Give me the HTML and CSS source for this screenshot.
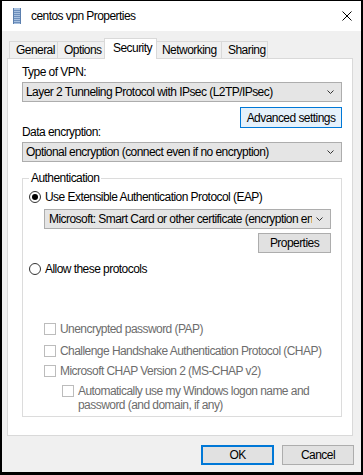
FILE: index.html
```html
<!doctype html>
<html lang="en">
<head>
<title>centos vpn Properties</title>
<meta name="viewport" content="width=device-width, initial-scale=1.0">
<link rel="stylesheet" href="styles.css">
</head>
<body>

<div class="window">
	<header class="titlebar">
		<svg class="app-icon" width="8" height="16" viewBox="0 0 8 16">
			<rect x="0" y="0" width="8" height="16" fill="#a9c1df"/>
			<rect x="0" y="0" width="1" height="16" fill="#5b7fae"/>
			<rect x="7" y="0" width="1" height="16" fill="#5b7fae"/>
			<rect x="1" y="2" width="6" height="1" fill="#6d8fbc"/>
			<rect x="1" y="4" width="6" height="1" fill="#6d8fbc"/>
			<rect x="1" y="6" width="6" height="1" fill="#6d8fbc"/>
			<rect x="1" y="8" width="6" height="1" fill="#6d8fbc"/>
			<rect x="1" y="10" width="6" height="1" fill="#6d8fbc"/>
			<rect x="1" y="12" width="6" height="1" fill="#6d8fbc"/>
			<rect x="1" y="14" width="6" height="1" fill="#6d8fbc"/>
		</svg>
		<span class="title">centos vpn Properties</span>
		<svg class="close" width="10" height="10" viewBox="0 0 10 10">
			<path d="M0.5 0.5 L9.5 9.5 M9.5 0.5 L0.5 9.5" stroke="#000" stroke-width="1" fill="none"/>
		</svg>
	</header>

	<div class="client">
		<nav class="tabs">
			<a class="tab tab-general">General</a>
			<a class="tab tab-options">Options</a>
			<a class="tab tab-security selected">Security</a>
			<a class="tab tab-networking">Networking</a>
			<a class="tab tab-sharing">Sharing</a>
		</nav>

		<section class="panel">
			<div class="label">Type of VPN:</div>
			<div class="combo">
				<span class="value">Layer 2 Tunneling Protocol with IPsec (L2TP/IPsec)</span>
				<svg class="chevron" width="7" height="4" viewBox="0 0 7 4"><path d="M0.5 0.5 L3.5 3.5 L6.5 0.5" stroke="#333" fill="none"/></svg>
			</div>
			<div class="button-row advanced-row">
				<button class="btn btn-advanced">Advanced settings</button>
			</div>
			<div class="label">Data encryption:</div>
			<div class="combo combo-encryption">
				<span class="value">Optional encryption (connect even if no encryption)</span>
				<svg class="chevron" width="7" height="4" viewBox="0 0 7 4"><path d="M0.5 0.5 L3.5 3.5 L6.5 0.5" stroke="#333" fill="none"/></svg>
			</div>

			<fieldset class="group">
				<legend>Authentication</legend>
				<div class="radio-row eap-row">
					<span class="radio checked"></span>
					<span>Use Extensible Authentication Protocol (EAP)</span>
				</div>
				<div class="combo combo-eap">
					<span class="value">Microsoft: Smart Card or other certificate (encryption enabled)</span>
					<svg class="chevron" width="7" height="4" viewBox="0 0 7 4"><path d="M0.5 0.5 L3.5 3.5 L6.5 0.5" stroke="#333" fill="none"/></svg>
				</div>
				<div class="button-row props-row">
					<button class="btn btn-props">Properties</button>
				</div>
				<div class="radio-row allow-row">
					<span class="radio"></span>
					<span>Allow these protocols</span>
				</div>

				<div class="check-row disabled pap-row">
					<span class="check"></span>
					<span>Unencrypted password (PAP)</span>
				</div>
				<div class="check-row disabled chap-row">
					<span class="check"></span>
					<span>Challenge Handshake Authentication Protocol (CHAP)</span>
				</div>
				<div class="check-row disabled mschap-row">
					<span class="check"></span>
					<span>Microsoft CHAP Version 2 (MS-CHAP v2)</span>
				</div>
				<div class="check-row disabled auto-row">
					<span class="check"></span>
					<span>Automatically use my Windows logon name and<br>password (and domain, if any)</span>
				</div>
			</fieldset>
		</section>

		<footer class="dialog-buttons">
			<button class="btn btn-ok">OK</button>
			<button class="btn btn-cancel">Cancel</button>
		</footer>
	</div>
</div>

</body>
</html>
```

FILE: styles.css
```css
html, body {
	margin: 0;
	padding: 0;
	background: #000;
}
body {
	font-family: "Liberation Sans", Arial, sans-serif;
	font-size: 12px;
	letter-spacing: -0.55px;
	color: #000;
}
.window {
	box-sizing: border-box;
	width: 363px;
	height: 475px;
	border-style: solid;
	border-color: #000;
	border-width: 1px 2px 3px 2px;
	display: flex;
	flex-direction: column;
	background: #f0f0f0;
}
.titlebar {
	height: 30px;
	flex: none;
	background: #fff;
	display: flex;
	align-items: center;
	padding: 0 9px 0 11px;
}
.app-icon {
	margin-top: -1px;
}
.title {
	margin-left: 10px;
	flex: 1;
	line-height: 16px;
}
.close {
	margin-top: -1px;
}
.client {
	flex: 1;
	padding: 7px 8px 0 5px;
	display: flex;
	flex-direction: column;
}

/* tabs */
.tabs {
	display: flex;
	align-items: flex-end;
	height: 20px;
	padding-left: 2px;
	position: relative;
	z-index: 1;
}
.tab {
	box-sizing: border-box;
	height: 17px;
	border: 1px solid #d9d9d9;
	border-bottom: none;
	border-right: none;
	background: #f0f0f0;
	line-height: 16px;
	padding-left: 6px;
}
.tab-general { width: 48px; }
.tab-options { width: 47px; }
.tab-security { width: 53px; padding-left: 8px; }
.tab-networking { width: 64px; padding-left: 5px; }
.tab-sharing { width: 47px; padding-left: 6px; border-right: 1px solid #d9d9d9; }
.tab.selected {
	height: 21px;
	margin-bottom: -1px;
	background: #fff;
	border-right: 1px solid #d9d9d9;
	line-height: 18px;
}
.tab.selected + .tab {
	border-left: none;
}

/* panel */
.panel {
	box-sizing: border-box;
	width: 346px;
	height: 378px;
	background: #fff;
	border: 1px solid #d9d9d9;
	padding: 5px 10px 0 14px;
}
.label {
	line-height: 16px;
}
.combo {
	box-sizing: border-box;
	height: 20px;
	margin-top: 2px;
	border: 1px solid #adadad;
	background: #e5e5e5;
	display: flex;
	align-items: center;
	padding: 0 7px 0 3px;
}
.combo .value {
	flex: 1;
	overflow: hidden;
	white-space: nowrap;
	line-height: 16px;
}
.chevron {
	flex: none;
	margin-left: 4px;
}
.button-row {
	display: flex;
	justify-content: flex-end;
}
.btn {
	box-sizing: border-box;
	font: inherit;
	letter-spacing: inherit;
	color: #000;
	height: 20px;
	padding: 0;
	border: 1px solid #adadad;
	background: #e1e1e1;
	line-height: 16px;
}
.advanced-row {
	margin-top: 5px;
	margin-bottom: -4px;
}
.btn-advanced {
	width: 102px;
	height: 21px;
	border-color: #0078d7;
	background: #e5f1fb;
}
.combo-encryption {
	margin-top: 2px;
}

/* authentication group */
.group {
	margin: 8px 0 0 0;
	padding: 0 10px 4px 6px;
	border: 1px solid #dcdcdc;
	min-width: 0;
}
.group legend {
	padding: 0 2px;
	margin-left: 0;
	line-height: 16px;
}
.radio-row,
.check-row {
	display: flex;
	align-items: center;
	line-height: 16px;
}
.radio {
	box-sizing: border-box;
	width: 12px;
	height: 12px;
	border: 1px solid #333;
	border-radius: 50%;
	background: #fff;
	margin-right: 4px;
	display: flex;
	align-items: center;
	justify-content: center;
}
.radio.checked::after {
	content: "";
	width: 6px;
	height: 6px;
	border-radius: 50%;
	background: #000;
}
.eap-row {
	margin-top: 3px;
}
.combo-eap {
	margin: 4px 0 0 15px;
	padding-left: 4px;
}
.props-row {
	margin-top: 4px;
}
.btn-props {
	width: 73px;
}
.allow-row {
	margin-top: 8px;
}
.check-row.disabled {
	color: #6d6d6d;
}
.check {
	box-sizing: border-box;
	flex: none;
	width: 12px;
	height: 12px;
	border: 1px solid #bcbcbc;
	background: #fff;
	margin: 0 4px 0 15px;
}
.pap-row { margin-top: 44px; }
.chap-row { margin-top: 6px; }
.mschap-row { margin-top: 4px; }
.auto-row {
	margin-top: 5px;
	align-items: flex-start;
	line-height: 14px;
}
.auto-row .check {
	margin-left: 33px;
	margin-top: 1px;
}

/* dialog buttons */
.dialog-buttons {
	display: flex;
	justify-content: flex-end;
	gap: 8px;
	margin-top: 9px;
	margin-right: -1px;
}
.btn-ok {
	width: 73px;
	border: 2px solid #0078d7;
}
.btn-cancel {
	width: 72px;
}
```
